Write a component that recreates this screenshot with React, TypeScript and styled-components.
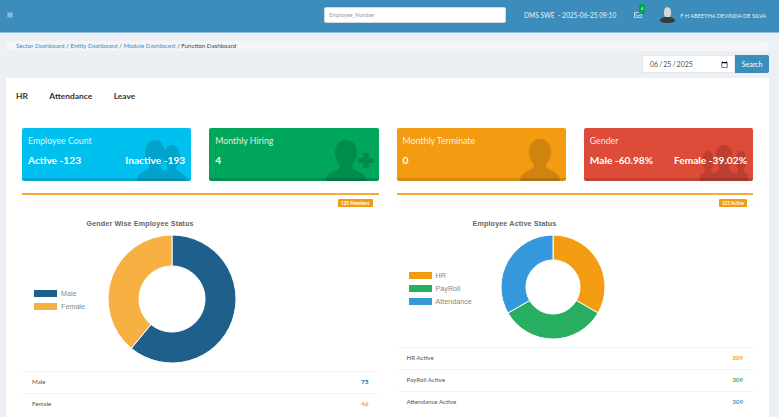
import React from "react";
import styled, { createGlobalStyle } from "styled-components";
import { FaBars, FaRegEnvelope } from "react-icons/fa";

const GlobalStyle = createGlobalStyle`
  html, body {
    margin: 0;
    height: 417px;
    overflow: hidden;
    background: #ecf0f5;
    font-family: Lato, "Noto Sans", sans-serif;
  }
  * { box-sizing: border-box; }
`;

const Header = styled.header`
  height: 33px;
  background: #3c8dbc;
  border-bottom: 1px solid #8dbdd8;
  display: flex;
  align-items: center;
  color: #fff;
  padding: 0 9px 2px 7px;
`;

const MenuButton = styled.span`
  display: flex;
  color: #dfeaf2;
  font-size: 6px;
  margin-right: 311px;
`;

const SearchInput = styled.input`
  width: 182px;
  height: 16px;
  border: 1px solid #d2d6de;
  border-radius: 2px;
  font: 5.5px Lato, sans-serif;
  padding: 0 4px;
  background: #fff;
  &::placeholder { color: #999; }
`;

const Clock = styled.span`
  font-size: 6.6px;
  margin-left: 18px;
  white-space: nowrap;
  color: #e8f1f7;
`;

const Mail = styled.span`
  position: relative;
  display: flex;
  margin-left: 18px;
  font-size: 8px;
  color: #cfe2ee;
`;

const MailBadge = styled.span`
  position: absolute;
  left: 5px;
  top: -7px;
  width: 6px;
  height: 10px;
  background: #00a65a;
  border-radius: 1px;
  font-size: 4px;
  line-height: 10px;
  text-align: center;
  color: #fff;
`;

const Avatar = styled.svg`
  width: 15px;
  height: 16px;
  margin-left: 18px;
`;

const UserName = styled.span`
  font-size: 5.6px;
  margin-left: 5px;
  white-space: nowrap;
  color: #e8f1f7;
`;

const Breadcrumb = styled.nav`
  margin: 8px 10px 0 6px;
  height: 10px;
  padding: 0 10px;
  background: #f4f5f6;
  border-radius: 5px;
  font-size: 6.2px;
  line-height: 10px;
  color: #444;
  a { color: #3c8dbc; text-decoration: none; }
`;

const DateBar = styled.form`
  display: flex;
  justify-content: flex-end;
  margin: 4px 10px 5px 0;
`;

const DateInput = styled.input`
  width: 93px;
  height: 18px;
  border: 1px solid #e3e6ea;
  border-radius: 2px 0 0 2px;
  background: #fff;
  color: #555;
  font: 7px Lato, sans-serif;
  padding: 0 4px 0 6px;
  &::-webkit-calendar-picker-indicator { width: 7px; height: 7px; padding: 0; margin: 0 2px 0 0; }
`;

const SearchButton = styled.button`
  width: 34px;
  height: 18px;
  border: 0;
  border-radius: 0 2px 2px 0;
  background: #3c8dbc;
  color: #fff;
  font: 7px Lato, sans-serif;
  padding: 0;
`;

const Panel = styled.main`
  margin: 0 10px 0 6px;
  background: #fff;
  padding: 0 16px;
  height: 339px;
`;

const Tabs = styled.div`
  display: flex;
  gap: 21.5px;
  margin-left: -6px;
  padding-top: 13px;
  height: 50px;
  font-size: 8.4px;
  line-height: 11px;
  font-weight: 700;
  color: #333;
`;

const CardGrid = styled.section`
  display: grid;
  grid-template-columns: repeat(4, 1fr);
  gap: 18px;
`;

const Card = styled.div<{ $bg: string }>`
  position: relative;
  height: 53px;
  background: ${(p) => p.$bg};
  border-radius: 2px;
  padding: 7px 6px 0;
  color: #fff;
  overflow: hidden;
  &::after {
    content: "";
    position: absolute;
    left: 0;
    right: 0;
    bottom: 0;
    height: 3px;
    background: rgba(0, 0, 0, 0.12);
  }
`;

const CardTitle = styled.div`
  font-size: 8.8px;
  line-height: 12px;
  opacity: 0.85;
`;

const CardValues = styled.div`
  position: relative;
  z-index: 1;
  display: flex;
  justify-content: space-between;
  margin-top: 6px;
  font-size: 10.2px;
  line-height: 14px;
  font-weight: 700;
  white-space: nowrap;
`;

const CardIcon = styled.svg<{ $w: number; $h: number }>`
  position: absolute;
  right: 5px;
  bottom: 0;
  width: ${(p) => p.$w}px;
  height: ${(p) => p.$h}px;
  fill: #000;
  opacity: 0.15;
`;

const ChartGrid = styled.section`
  display: grid;
  grid-template-columns: repeat(2, 1fr);
  gap: 18px;
  margin-top: 12px;
`;

const Box = styled.article`
  border-top: 2px solid #f7a93a;
`;

const BoxHead = styled.div`
  display: flex;
  justify-content: flex-end;
  height: 12px;
  padding: 4px 6px 0 0;
  border-bottom: 1px solid #f6f6f6;
`;

const Badge = styled.span`
  height: 8px;
  padding: 0 3px;
  background: #f39c12;
  border-radius: 1px;
  color: #fff;
  font-size: 4.6px;
  line-height: 8px;
  font-weight: 700;
`;

const ChartArea = styled.div`
  width: 236px;
  padding: 12px 0 8px 12px;
`;

const ChartTitle = styled.div`
  margin-left: -12px;
  height: 16px;
  text-align: center;
  font: bold 7.2px/10px "Liberation Sans", sans-serif;
  letter-spacing: 0.12px;
  color: #666;
`;

const ChartBody = styled.div`
  display: flex;
  align-items: center;
`;

const Legend = styled.ul<{ $w: number }>`
  list-style: none;
  margin: 2px 0 0;
  padding: 0;
  width: ${(p) => p.$w}px;
  display: grid;
  gap: 3px;
`;

const LegendItem = styled.li`
  display: flex;
  align-items: center;
  gap: 4px;
  height: 10px;
  font: 7.2px "Liberation Sans", sans-serif;
  color: #888;
`;

const Swatch = styled.i<{ $color: string }>`
  width: 23px;
  height: 7px;
  background: ${(p) => p.$color};
`;

const StatRow = styled.div`
  display: flex;
  justify-content: space-between;
  align-items: center;
  height: 22px;
  padding: 0 10px 2px;
  border-top: 1px solid #f4f4f4;
  font-size: 6.2px;
  color: #555;
`;

const StatValue = styled.b<{ $color: string }>`
  color: ${(p) => p.$color};
`;

const BUST =
  "M20 0C27 0 31 6 31 13C31 19 28 23 26 26C26 29 28 30 32 32C37 34 40 37 40 42L0 42C0 37 3 34 8 32C12 30 14 29 14 26C12 23 9 19 9 13C9 6 13 0 20 0Z";

type Slice = { label: string; value: number; color: string };

const point = (r: number, a: number, c: number) =>
  [c + r * Math.sin(a), c - r * Math.cos(a)].map((n) => n.toFixed(2)).join(" ");

const Donut: React.FC<{ slices: Slice[]; radius: number; hole: number }> = ({ slices, radius, hole }) => {
  const total = slices.reduce((s, x) => s + x.value, 0);
  let start = 0;
  return (
    <svg width={radius * 2} height={radius * 2} style={{ display: "block" }}>
      {slices.map((s) => {
        const end = start + (s.value / total) * Math.PI * 2;
        const big = end - start > Math.PI ? 1 : 0;
        const d = `M${point(radius, start, radius)}A${radius} ${radius} 0 ${big} 1 ${point(radius, end, radius)}L${point(hole, end, radius)}A${hole} ${hole} 0 ${big} 0 ${point(hole, start, radius)}Z`;
        start = end;
        return <path key={s.label} d={d} fill={s.color} stroke="#fff" strokeWidth={1} />;
      })}
    </svg>
  );
};

const genderSlices: Slice[] = [
  { label: "Male", value: 60.98, color: "#1f5f8b" },
  { label: "Female", value: 39.02, color: "#f7b042" },
];

const activeSlices: Slice[] = [
  { label: "HR", value: 309, color: "#f39c12" },
  { label: "PayRoll", value: 309, color: "#27ae60" },
  { label: "Attendance", value: 309, color: "#3498db" },
];

const App: React.FC = () => (
  <>
    <GlobalStyle />
    <Header>
      <MenuButton><FaBars /></MenuButton>
      <SearchInput placeholder="Employee_Number" />
      <Clock>DMS SWE&nbsp; - 2025-06-25 09:10</Clock>
      <Mail>
        <FaRegEnvelope />
        <MailBadge>6</MailBadge>
      </Mail>
      <Avatar viewBox="0 0 15 16">
        <ellipse cx="7.5" cy="5.5" rx="3.6" ry="5.5" fill="#d8d8d4" />
        <path d="M0 13.500c0-2 3-3 5-3.500h5c2 .5 5 1.500 5 3.500 0 1.500-3 2.500-7.500 2.500s-7.500-1-7.500-2.500z" fill="#3a3a3a" />
      </Avatar>
      <UserName>F H ABEETHA DEVINDA DE SILVA</UserName>
    </Header>

    <Breadcrumb>
      <a href="#">Sector Dashboard</a> / <a href="#">Entity Dashboard</a> / <a href="#">Module Dashboard</a> / Function Dashboard
    </Breadcrumb>

    <DateBar>
      <DateInput type="date" defaultValue="2025-06-25" />
      <SearchButton type="button">Search</SearchButton>
    </DateBar>

    <Panel>
      <Tabs>
        <span>HR</span>
        <span>Attendance</span>
        <span>Leave</span>
      </Tabs>

      <CardGrid>
        <Card $bg="#00c0ef">
          <CardTitle>Employee Count</CardTitle>
          <CardValues><span>Active -123</span><span>Inactive -193</span></CardValues>
          <CardIcon $w={49} $h={41} viewBox="0 0 49 41">
            <path transform="translate(20 5) scale(.74 .86)" d={BUST} />
            <path transform="scale(.9 .98)" d={BUST} />
          </CardIcon>
        </Card>
        <Card $bg="#00a65a">
          <CardTitle>Monthly Hiring</CardTitle>
          <CardValues><span>4</span></CardValues>
          <CardIcon $w={48} $h={41} viewBox="0 0 48 41">
            <path transform="scale(1 .98)" d={BUST} />
            <path d="M37 13h6v5h5v5h-5v5h-6v-5h-5v-5h5z" />
          </CardIcon>
        </Card>
        <Card $bg="#f39c12">
          <CardTitle>Monthly Terminate</CardTitle>
          <CardValues><span>0</span></CardValues>
          <CardIcon $w={41} $h={42} viewBox="0 0 41 42">
            <path d={BUST} />
          </CardIcon>
        </Card>
        <Card $bg="#dd4b39">
          <CardTitle>Gender</CardTitle>
          <CardValues><span>Male -60.98%</span><span>Female -39.02%</span></CardValues>
          <CardIcon $w={48} $h={36} viewBox="0 0 48 36">
            <path transform="translate(-2 6) scale(.5 .72)" d={BUST} />
            <path transform="translate(31 6) scale(.5 .72)" d={BUST} />
            <path transform="translate(9 0) scale(.75 .86)" d={BUST} />
          </CardIcon>
        </Card>
      </CardGrid>

      <ChartGrid>
        <Box>
          <BoxHead><Badge>123 Members</Badge></BoxHead>
          <ChartArea>
            <ChartTitle>Gender Wise Employee Status</ChartTitle>
            <ChartBody>
              <Legend $w={74}>
                {genderSlices.map((s) => (
                  <LegendItem key={s.label}><Swatch $color={s.color} />{s.label}</LegendItem>
                ))}
              </Legend>
              <Donut slices={genderSlices} radius={64} hole={33} />
            </ChartBody>
          </ChartArea>
          <StatRow>Male<StatValue $color="#1f5f8b">75</StatValue></StatRow>
          <StatRow>Female<StatValue $color="#f39c12">46</StatValue></StatRow>
        </Box>
        <Box>
          <BoxHead><Badge>123 Active</Badge></BoxHead>
          <ChartArea>
            <ChartTitle>Employee Active Status</ChartTitle>
            <ChartBody>
              <Legend $w={92}>
                {activeSlices.map((s) => (
                  <LegendItem key={s.label}><Swatch $color={s.color} />{s.label}</LegendItem>
                ))}
              </Legend>
              <Donut slices={activeSlices} radius={52} hole={27} />
            </ChartBody>
          </ChartArea>
          <StatRow>HR Active<StatValue $color="#f39c12">309</StatValue></StatRow>
          <StatRow>PayRoll Active<StatValue $color="#27ae60">309</StatValue></StatRow>
          <StatRow>Attendance Active<StatValue $color="#3498db">309</StatValue></StatRow>
        </Box>
      </ChartGrid>
    </Panel>
  </>
);

export default App;
